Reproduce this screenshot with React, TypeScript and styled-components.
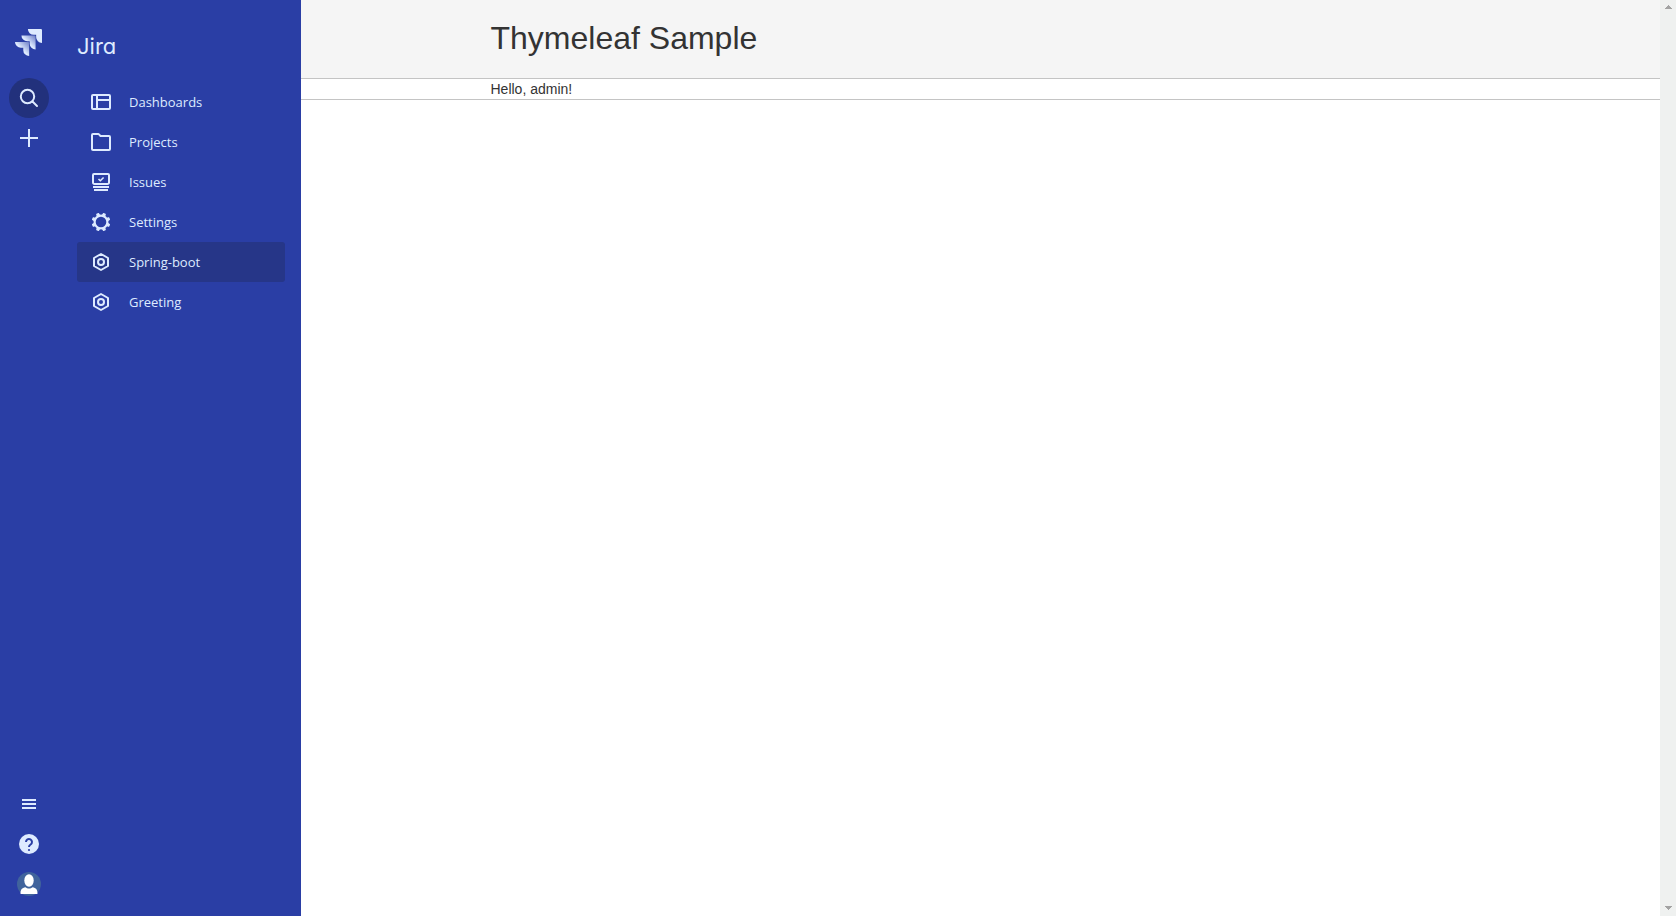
import React from "react";
import styled, { createGlobalStyle } from "styled-components";

const GlobalStyle = createGlobalStyle`
  *, *::before, *::after { box-sizing: border-box; }
  body { margin: 0; background: #ffffff; }
`;

const ink = "#deebff";
const blue = "#2a3ea5";

const Page = styled.div`
  display: flex;
  height: 100vh;
  font-family: "Liberation Sans", Arial, sans-serif;
  color: #333333;
`;

const Sidebar = styled.aside`
  display: flex;
  flex: 0 0 301px;
  background: ${blue};
  color: ${ink};
  font-family: "Segoe UI", "Open Sans", sans-serif;
`;

const Rail = styled.div`
  display: flex;
  flex-direction: column;
  justify-content: space-between;
  width: 58px;
  padding: 22px 9px 12px;
`;

const RailGroup = styled.div`
  display: flex;
  flex-direction: column;
`;

const LogoLink = styled.a`
  display: flex;
  align-items: center;
  justify-content: center;
  width: 38px;
  height: 40px;
  margin-bottom: 16px;
`;

const RoundButton = styled.button<{ $filled?: boolean }>`
  display: flex;
  align-items: center;
  justify-content: center;
  width: 40px;
  height: 40px;
  padding: 0;
  border: 0;
  border-radius: 50%;
  background: ${(p) => (p.$filled ? "#22317c" : "transparent")};
  color: ${ink};
  cursor: pointer;
`;

const Panel = styled.div`
  flex: 1;
  padding: 28px 16px 0 19px;
`;

const Product = styled.div`
  height: 54px;
  font-family: Inter, sans-serif;
  font-feature-settings: "cv11";
  font-size: 22px;
  line-height: 36px;
`;

const NavItem = styled.a<{ $active?: boolean }>`
  display: flex;
  align-items: center;
  gap: 16px;
  height: 40px;
  padding: 0 12px;
  border-radius: 3px;
  background: ${(p) => (p.$active ? "#263688" : "transparent")};
  color: ${ink};
  font-size: 13px;
  line-height: 20px;
  text-decoration: none;
`;

const Main = styled.main`
  flex: 1;
  min-width: 0;
`;

const PageHeader = styled.header`
  padding: 20px 0 21px;
  border-bottom: 1px solid #c4c4c4;
  background: #f5f5f5;
`;

const PageBody = styled.section`
  border-bottom: 1px solid #c4c4c4;
`;

const Container = styled.div`
  max-width: 980px;
  margin: 0 auto;
`;

const Title = styled.h1`
  margin: 0;
  font-size: 32px;
  font-weight: 400;
  line-height: 37px;
`;

const Greeting = styled.p`
  margin: 0;
  font-size: 14px;
  line-height: 20px;
`;

const ScrollTrack = styled.div`
  display: flex;
  flex: 0 0 16px;
  flex-direction: column;
  align-items: center;
  justify-content: space-between;
  padding: 5px 0 6px;
  background: #eff1f0;
`;

const Icon = ({ children, size = 24 }: { children: React.ReactNode; size?: number }) => (
  <svg
    width={size}
    height={size}
    viewBox="0 0 24 24"
    fill="none"
    stroke="currentColor"
    strokeWidth="2"
    strokeLinejoin="round"
    aria-hidden="true"
  >
    {children}
  </svg>
);

const JiraLogo = () => (
  <svg width="27" height="27" viewBox="0 0 24 24" aria-hidden="true">
    <defs>
      <linearGradient id="fadeMid" gradientUnits="userSpaceOnUse" x1="18" y1="6" x2="11" y2="13">
        <stop offset="0.1" stopColor={ink} stopOpacity="0.45" />
        <stop offset="0.9" stopColor={ink} />
      </linearGradient>
      <linearGradient id="fadeLow" gradientUnits="userSpaceOnUse" x1="12.4" y1="11.6" x2="5.4" y2="18.6">
        <stop offset="0.1" stopColor={ink} stopOpacity="0.45" />
        <stop offset="0.9" stopColor={ink} />
      </linearGradient>
    </defs>
    <path fill="url(#fadeLow)" d="M11.571 11.513H0a5.218 5.218 0 0 0 5.232 5.215h2.13v2.057A5.215 5.215 0 0 0 12.575 24V12.518a1.005 1.005 0 0 0-1.005-1.005z" />
    <path fill="url(#fadeMid)" d="M17.294 5.757H5.736a5.215 5.215 0 0 0 5.215 5.214h2.129v2.058a5.218 5.218 0 0 0 5.215 5.214V6.758a1.001 1.001 0 0 0-1.001-1.001z" />
    <path fill={ink} d="M23.013 0H11.455a5.215 5.215 0 0 0 5.215 5.215h2.129v2.057A5.215 5.215 0 0 0 24 12.483V1.005A1.001 1.001 0 0 0 23.013 0z" />
  </svg>
);

const DashboardIcon = () => (
  <Icon>
    <rect x="3" y="5" width="18" height="14" rx="1" />
    <path d="M8 5v14M8 10h13" />
  </Icon>
);

const FolderIcon = () => (
  <Icon>
    <path d="M3 19V5a1 1 0 0 1 1-1h5.200a1 1 0 0 1 .8.4L11.500 6H20a1 1 0 0 1 1 1v12a1 1 0 0 1-1 1H4a1 1 0 0 1-1-1z" />
  </Icon>
);

const IssuesIcon = () => (
  <Icon>
    <path d="M4 5a1 1 0 0 1 1-1h14a1 1 0 0 1 1 1v7.500a1.500 1.500 0 0 1-1.500 1.500h-13A1.500 1.500 0 0 1 4 12.500z" />
    <path d="M9.500 9l1.800 1.800L14.600 7.500" strokeWidth="1.600" />
    <path d="M4 17h16M5 20h14" />
  </Icon>
);

const GearIcon = () => (
  <Icon>
    <circle cx="12" cy="12" r="6.400" strokeWidth="2.200" />
    {[22.5, 67.5, 112.5, 157.5, 202.5, 247.5, 292.5, 337.5].map((angle) => (
      <path key={angle} d="M10.700 5L11 3.200h2L13.300 5z" strokeWidth="1" fill="currentColor" transform={`rotate(${angle} 12 12)`} />
    ))}
  </Icon>
);

const AddonIcon = () => (
  <Icon>
    <path d="M12 4l7 4v8l-7 4-7-4V8z" />
    <circle cx="12" cy="12" r="3" />
  </Icon>
);

const Arrow = ({ down }: { down?: boolean }) => (
  <svg width="8" height="4" viewBox="0 0 8 4" shapeRendering="crispEdges" aria-hidden="true">
    <path fill="#a3a3a3" d={down ? "M0 0h8L4 4z" : "M0 4h8L4 0z"} />
  </svg>
);

const navigation = [
  { label: "Dashboards", icon: <DashboardIcon /> },
  { label: "Projects", icon: <FolderIcon /> },
  { label: "Issues", icon: <IssuesIcon /> },
  { label: "Settings", icon: <GearIcon /> },
  { label: "Spring-boot", icon: <AddonIcon />, active: true },
  { label: "Greeting", icon: <AddonIcon /> },
];

export default function App() {
  return (
    <Page>
      <GlobalStyle />
      <Sidebar>
        <Rail>
          <RailGroup>
            <LogoLink href="#" aria-label="Jira home">
              <JiraLogo />
            </LogoLink>
            <RoundButton $filled aria-label="Search">
              <Icon>
                <circle cx="10.500" cy="10.500" r="6.700" />
                <path d="M15.500 15.500l4.500 4.500" strokeLinecap="round" />
              </Icon>
            </RoundButton>
            <RoundButton aria-label="Create">
              <Icon>
                <path d="M12 3v18M3 12h18" />
              </Icon>
            </RoundButton>
          </RailGroup>
          <RailGroup>
            <RoundButton aria-label="Menu">
              <Icon>
                <path d="M5 8h14M5 12h14M5 16h14" />
              </Icon>
            </RoundButton>
            <RoundButton aria-label="Help">
              <Icon>
                <circle cx="12" cy="12" r="10" fill="currentColor" stroke="none" />
                <path d="M9 10a3 3 0 1 1 4.600 2.500C12.500 13.200 12 13.600 12 15" stroke={blue} />
                <circle cx="12" cy="18" r="1.100" fill={blue} stroke="none" />
              </Icon>
            </RoundButton>
            <RoundButton aria-label="Profile">
              <Icon>
                <circle cx="12" cy="12" r="12" fill="#40639c" stroke="none" />
                <g fill="#ffffff" stroke="none">
                  <ellipse cx="12" cy="8.500" rx="4.700" ry="6.200" />
                  <path d="M3.500 21.500c0-4 1.500-5.500 5-6.200 1.800 1.600 5.200 1.600 7 0 3.500.7 5 2.200 5 6.200 0 .4-.3.500-.7.500H4.200c-.4 0-.7-.1-.7-.5z" />
                </g>
              </Icon>
            </RoundButton>
          </RailGroup>
        </Rail>
        <Panel>
          <Product>Jira</Product>
          <nav aria-label="Main">
            {navigation.map((item) => (
              <NavItem key={item.label} href="#" $active={item.active} aria-current={item.active ? "page" : undefined}>
                {item.icon}
                {item.label}
              </NavItem>
            ))}
          </nav>
        </Panel>
      </Sidebar>
      <Main>
        <PageHeader>
          <Container>
            <Title>Thymeleaf Sample</Title>
          </Container>
        </PageHeader>
        <PageBody>
          <Container>
            <Greeting>Hello, admin!</Greeting>
          </Container>
        </PageBody>
      </Main>
      <ScrollTrack aria-hidden="true">
        <Arrow />
        <Arrow down />
      </ScrollTrack>
    </Page>
  );
}
